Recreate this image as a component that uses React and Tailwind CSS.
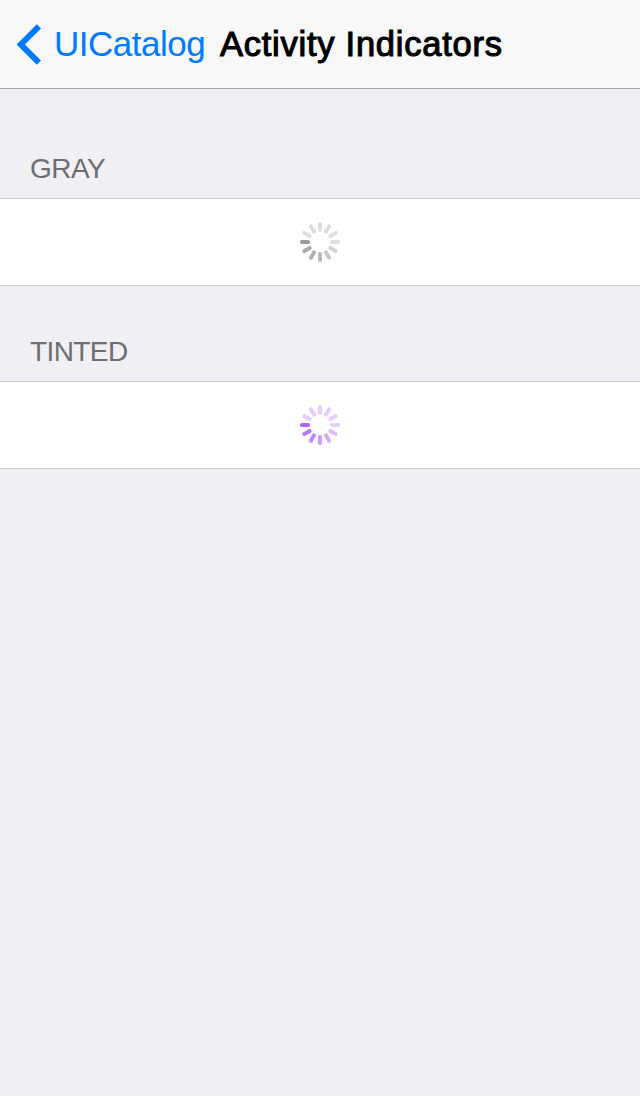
const GRAY = ['#dedede', '#d2d2d2', '#c7c7c7', '#bbbbbb', '#b0b0b0', '#a9a9a9', '#9b9b9b', '#dedede', '#dedede', '#dedede', '#dedede', '#dedede'];
const TINTED = ['#e7cdfd', '#dfbcfc', '#d6a9fb', '#cd98fb', '#c588fa', '#bd77f8', '#b264f7', '#e7cdfd', '#e7cdfd', '#e7cdfd', '#e7cdfd', '#e7cdfd'];

function Spinner({ colors }) {
  return (
    <svg className="size-10" viewBox="0 0 40 40" role="img" aria-label="Loading">
      {colors.map((fill, i) => (
        <rect key={i} x="30" y="18" width="10" height="4" rx="1.8" fill={fill} transform={`rotate(${i * 30} 20 20)`} />
      ))}
    </svg>
  );
}

function Section({ label, labelClass, colors }) {
  return (
    <section>
      <h2 className={`pt-px pb-[13px] pl-[30px] text-[28px] leading-8 text-[#6d6d72] ${labelClass}`}>{label}</h2>
      <div className="flex h-[88px] items-center justify-center border-y border-[#c8c7cc] bg-white">
        <Spinner colors={colors} />
      </div>
    </section>
  );
}

export default function App() {
  return (
    <div className="h-[1096px] w-[640px] overflow-hidden bg-[#efeff4] font-['Liberation_Sans',Arial,sans-serif]">
      <header className="flex h-[89px] items-center border-b border-[#a7a7aa] bg-[#f7f7f7] pl-4">
        <button className="flex items-center text-[#007aff]">
          <svg className="h-[42px] w-[26px]" viewBox="0 0 26 42" fill="currentColor" aria-hidden="true">
            <path d="M0.5 21.5 20.8 1.2 25 5.4 8.9 21.5 25 37.6 20.8 41.8Z" />
          </svg>
          <span className="ml-3 w-[166px] text-left text-[35px] leading-10 tracking-[-0.5px] whitespace-nowrap">UICatalog</span>
        </button>
        <h1 className="text-[34.5px] leading-10 tracking-[0.75px] whitespace-nowrap text-black [-webkit-text-stroke:1.1px_black]">Activity Indicators</h1>
      </header>
      <main className="flex flex-col gap-[49px] pt-[63px]">
        <Section label="GRAY" labelClass="tracking-[-0.5px]" colors={GRAY} />
        <Section label="TINTED" labelClass="tracking-[-0.6px]" colors={TINTED} />
      </main>
    </div>
  );
}
